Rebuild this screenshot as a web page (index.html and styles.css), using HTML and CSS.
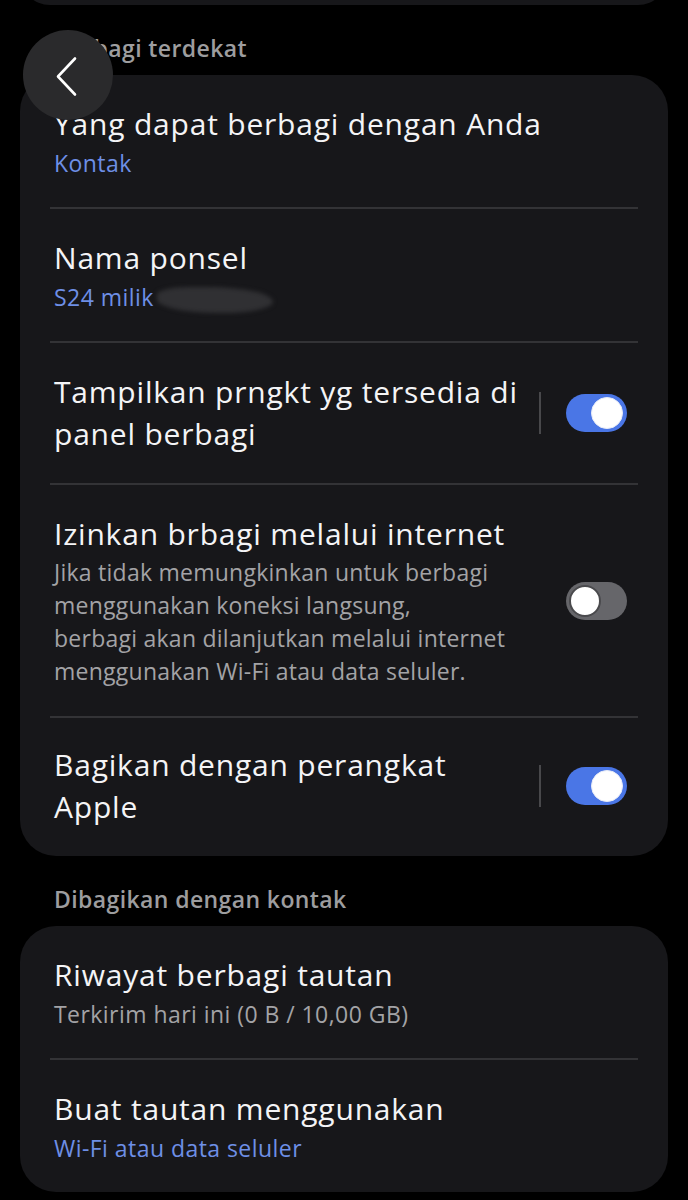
FILE: index.html
```html
<!DOCTYPE html>
<html lang="id">
<head>
  <meta charset="UTF-8">
  <meta name="viewport" content="width=device-width, initial-scale=1.0">
  <title>Berbagi terdekat</title>
  <link rel="stylesheet" href="styles.css">
</head>
<body>
  <div class="screen">
    <div class="card card-stub"></div>

    <button class="back" aria-label="Kembali">
      <svg width="90" height="90" viewBox="0 0 90 90">
        <path d="M52 28.5 L35 46.5 L52 64.5" fill="none" stroke="#fff" stroke-width="2.6" stroke-linecap="round" stroke-linejoin="round"/>
      </svg>
    </button>

    <h2 class="section-title">Berbagi terdekat</h2>
    <div class="card">
      <div class="row">
        <div class="text">
          <div class="title">Yang dapat berbagi dengan Anda</div>
          <div class="sub blue">Kontak</div>
        </div>
      </div>
      <div class="divider"></div>
      <div class="row">
        <div class="text">
          <div class="title">Nama ponsel</div>
          <div class="sub blue">S24 milik <span class="smudge"></span></div>
        </div>
      </div>
      <div class="divider"></div>
      <div class="row">
        <div class="text">
          <div class="title">Tampilkan prngkt yg tersedia di<br>panel berbagi</div>
        </div>
        <div class="vline"></div>
        <div class="switch on"><span class="knob"></span></div>
      </div>
      <div class="divider"></div>
      <div class="row">
        <div class="text">
          <div class="title">Izinkan brbagi melalui internet</div>
          <div class="desc">Jika tidak memungkinkan untuk berbagi<br>menggunakan koneksi langsung,<br>berbagi akan dilanjutkan melalui internet<br>menggunakan Wi-Fi atau data seluler.</div>
        </div>
        <div class="switch"><span class="knob"></span></div>
      </div>
      <div class="divider"></div>
      <div class="row row-last">
        <div class="text">
          <div class="title">Bagikan dengan perangkat<br>Apple</div>
        </div>
        <div class="vline"></div>
        <div class="switch on"><span class="knob"></span></div>
      </div>
    </div>

    <h2 class="section-title">Dibagikan dengan kontak</h2>
    <div class="card">
      <div class="row">
        <div class="text">
          <div class="title">Riwayat berbagi tautan</div>
          <div class="sub grey">Terkirim hari ini (0 B / 10,00 GB)</div>
        </div>
      </div>
      <div class="divider"></div>
      <div class="row">
        <div class="text">
          <div class="title">Buat tautan menggunakan</div>
          <div class="sub blue">Wi-Fi atau data seluler</div>
        </div>
      </div>
    </div>
  </div>
</body>
</html>
```

FILE: styles.css
```css
body { margin: 0; background: #000; font-family: "Open Sans", Roboto, sans-serif; color: #f4f4f6; }
.screen { position: relative; width: 688px; height: 1200px; overflow: hidden; }

.card { background: #17171a; border-radius: 36px; margin: 0 20px; }
.card-stub { height: 60px; margin-top: -55px; }

.section-title { margin: 0; padding: 28px 54px 12px; font-size: 23px; line-height: 30px; font-weight: 600; color: #9d9d9f; letter-spacing: 0.4px; }

.row { display: flex; align-items: center; padding: 28px 41px 28px 34px; }
.row-last { padding: 26px 41px 28px 34px; }
.text { flex: 1; }
.title { font-size: 30px; line-height: 42px; letter-spacing: 0.8px; }
.sub { margin-top: 2px; font-size: 23px; line-height: 32px; letter-spacing: 0.45px; }
.blue { color: #6e8fe6; }
.grey { color: #a3a3a6; }
.desc { margin-top: 1px; font-size: 23px; line-height: 33px; color: #a3a3a6; letter-spacing: 0.25px; }

.divider { height: 2px; background: #333336; margin: 0 30px; }

.smudge { display: inline-block; width: 116px; height: 26px; margin-left: -3px; vertical-align: -7px; background: #303033; border-radius: 30% 60% 45% 55%; filter: blur(2px); }

.vline { width: 2px; height: 42px; background: #48484b; margin-right: 25px; }

.switch { position: relative; width: 61px; height: 38px; border-radius: 19px; background: #66666a; box-sizing: border-box; }
.switch .knob { position: absolute; top: 3px; left: 3px; width: 32px; height: 32px; border-radius: 50%; background: #fff; box-sizing: border-box; border: 2px solid #4a4a4d; }
.switch.on { background: #4a76e6; }
.switch.on .knob { left: auto; right: 4px; border: 1px solid #e8ecf8; }

.back { position: absolute; left: 23px; top: 30px; width: 90px; height: 90px; padding: 0; border: 0; border-radius: 50%; background: #2a2a2c; z-index: 2; }
.back svg { display: block; }
```
